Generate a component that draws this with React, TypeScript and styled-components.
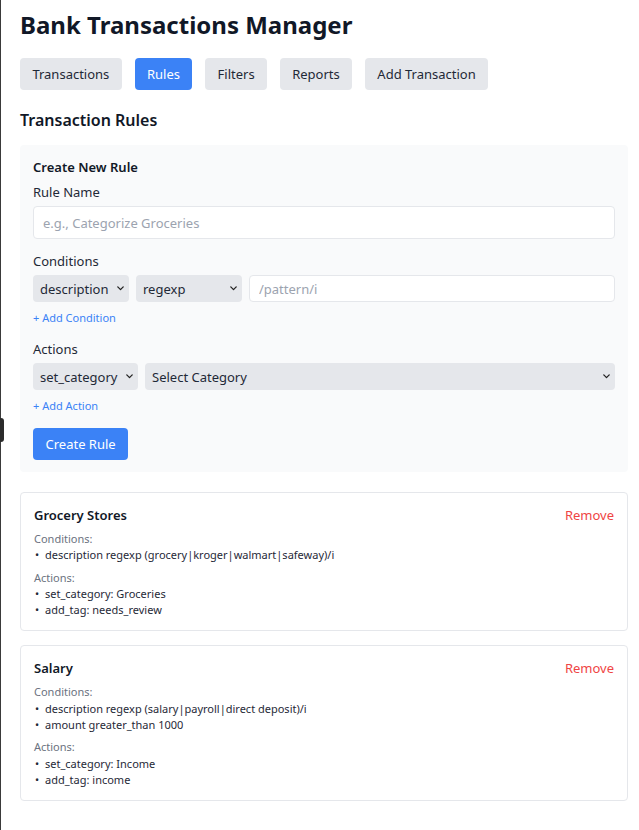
import React from 'react';
import styled, { createGlobalStyle } from 'styled-components';

const GlobalStyle = createGlobalStyle`
  html, body {
    margin: 0;
    padding: 0;
    background: #fff;
  }
  body {
    font-family: "Noto Sans", "Open Sans", sans-serif;
    color: #111827;
  }
  * {
    box-sizing: border-box;
  }
`;

type Rule = {
  name: string,
  conditions: string[],
  actions: string[],
};

const rules: Rule[] = [
  {
    name: 'Grocery Stores',
    conditions: ['description regexp (grocery|kroger|walmart|safeway)/i'],
    actions: ['set_category: Groceries', 'add_tag: needs_review'],
  },
  {
    name: 'Salary',
    conditions: [
      'description regexp (salary|payroll|direct deposit)/i',
      'amount greater_than 1000',
    ],
    actions: ['set_category: Income', 'add_tag: income'],
  },
];

const tabs = ['Transactions', 'Rules', 'Filters', 'Reports', 'Add Transaction'];

const Frame = styled.div`
  min-height: 100vh;
  border-left: 1px solid #3a3a3a;
  padding: 9px 11px 30px 19px;
`;

// the little drag grip on the pane edge
const Grip = styled.div`
  position: fixed;
  left: 0;
  top: 418px;
  width: 4px;
  height: 24px;
  background: #2b2b2b;
  border-radius: 0 3px 3px 0;
`;

const Title = styled.h1`
  margin: 0;
  font-size: 24px;
  line-height: 32px;
  font-weight: 700;
  color: #111827;
`;

const TabBar = styled.nav`
  display: flex;
  gap: 12.8px;
  margin-top: 17px;
`;

const Tab = styled.button<{ $active?: boolean }>`
  height: 32px;
  padding: 0 12.4px;
  border: none;
  border-radius: 4px;
  font-family: inherit;
  font-size: 13px;
  background: ${(p) => (p.$active ? '#3b82f6' : '#e5e7eb')};
  color: ${(p) => (p.$active ? '#fff' : '#1f2937')};
  cursor: pointer;
`;

const SectionTitle = styled.h2`
  margin: 16px 0 11px;
  font-size: 16px;
  line-height: 28px;
  font-weight: 600;
`;

const FormPanel = styled.section`
  background: #f9fafb;
  border-radius: 4px;
  padding: 12px 13px;
`;

const PanelTitle = styled.h3`
  margin: 0 0 5px;
  font-size: 13px;
  line-height: 20px;
  font-weight: 600;
`;

const Field = styled.div`
  margin-bottom: 12px;
`;

const Label = styled.label`
  display: block;
  font-size: 13px;
  line-height: 20px;
  margin-bottom: 4px;
  color: #1f2937;
`;

const TextInput = styled.input<{ $height?: number }>`
  display: block;
  width: 100%;
  min-width: 0;
  flex: 1;
  height: ${(p) => p.$height || 33}px;
  padding: 0 9px;
  border: 1px solid #e5e7eb;
  border-radius: 4px;
  background: #fff;
  font-family: inherit;
  font-size: 13px;
  color: #111827;
  &::placeholder {
    color: #9ca3af;
  }
`;

const Row = styled.div`
  display: flex;
  gap: 7px;
`;

const SelectWrap = styled.div<{ $width?: number }>`
  position: relative;
  ${(p) => (p.$width ? `width: ${p.$width}px; flex: none;` : 'flex: 1;')}
`;

const Select = styled.select`
  appearance: none;
  display: block;
  width: 100%;
  height: 27px;
  padding: 0 20px 0 7px;
  border: none;
  border-radius: 4px;
  background-color: #e5e7eb;
  font-family: inherit;
  font-size: 13px;
  color: #1f2937;
`;

const Chevron = styled.svg`
  position: absolute;
  right: 5px;
  top: 11px;
  width: 7px;
  height: 5px;
  pointer-events: none;
`;

const LinkButton = styled.button`
  margin-top: 8px;
  padding: 0;
  border: none;
  background: none;
  font-family: inherit;
  font-size: 11px;
  line-height: 16px;
  color: #3b82f6;
  cursor: pointer;
`;

const PrimaryButton = styled.button`
  height: 32px;
  padding: 0 12.5px;
  margin-top: 1px;
  border: none;
  border-radius: 4px;
  background: #3b82f6;
  color: #fff;
  font-family: inherit;
  font-size: 13px;
  cursor: pointer;
`;

const CardList = styled.div`
  display: flex;
  flex-direction: column;
  gap: 14px;
  margin-top: 20px;
`;

const RuleCard = styled.article`
  border: 1px solid #e5e7eb;
  border-radius: 4px;
  padding: 12px 13px 12px;
`;

const CardHeader = styled.div`
  display: flex;
  justify-content: space-between;
  align-items: center;
`;

const CardTitle = styled.h4`
  margin: 0;
  font-size: 13px;
  line-height: 20px;
  font-weight: 600;
`;

const RemoveButton = styled.button`
  padding: 0;
  border: none;
  background: none;
  font-family: inherit;
  font-size: 13px;
  color: #ef4444;
  cursor: pointer;
`;

const Group = styled.div`
  margin-top: 6px;
`;

const GroupLabel = styled.div`
  font-size: 11px;
  line-height: 16.3px;
  color: #6b7280;
`;

const ItemList = styled.ul`
  list-style: none;
  margin: 0;
  padding: 0;
`;

const Item = styled.li`
  font-size: 11px;
  line-height: 16.3px;
  color: #1f2937;
  &::before {
    content: '•';
    display: inline-block;
    width: 10px;
    margin-left: 1px;
  }
`;

type DropdownProps = {
  width?: number,
  value: string,
  options: { value: string, label: string }[],
};

const Dropdown = ({ width, value, options }: DropdownProps) => (
  <SelectWrap $width={width}>
    <Select defaultValue={value}>
      {options.map((o) => (
        <option key={o.value} value={o.value}>{o.label}</option>
      ))}
    </Select>
    <Chevron viewBox="0 0 7 5" fill="none">
      <path d="M0.8 0.9 L3.5 3.6 L6.2 0.9" stroke="#222" strokeWidth="1.3" strokeLinecap="round" strokeLinejoin="round" />
    </Chevron>
  </SelectWrap>
);

const opt = (v: string, label?: string) => ({ value: v, label: label || v });

export default function App() {
  return (
    <>
      <GlobalStyle />
      <Grip />
      <Frame>
        <Title>Bank Transactions Manager</Title>
        <TabBar>
          {tabs.map((t) => (
            <Tab key={t} $active={t === 'Rules'}>{t}</Tab>
          ))}
        </TabBar>

        <SectionTitle>Transaction Rules</SectionTitle>

        <FormPanel>
          <PanelTitle>Create New Rule</PanelTitle>
          <Field>
            <Label>Rule Name</Label>
            <TextInput placeholder="e.g., Categorize Groceries" />
          </Field>

          <Field>
            <Label>Conditions</Label>
            <Row>
              <Dropdown width={96} value="description" options={[opt('description'), opt('amount')]} />
              <Dropdown width={106} value="regexp" options={[opt('regexp'), opt('greater_than')]} />
              <TextInput $height={27} placeholder="/pattern/i" />
            </Row>
            <LinkButton>+ Add Condition</LinkButton>
          </Field>

          <Field>
            <Label>Actions</Label>
            <Row>
              <Dropdown width={105} value="set_category" options={[opt('set_category'), opt('add_tag')]} />
              <Dropdown
                value=""
                options={[opt('', 'Select Category'), opt('Groceries'), opt('Income')]}
              />
            </Row>
            <LinkButton>+ Add Action</LinkButton>
          </Field>

          <PrimaryButton>Create Rule</PrimaryButton>
        </FormPanel>

        <CardList>
          {rules.map((r) => (
            <RuleCard key={r.name}>
              <CardHeader>
                <CardTitle>{r.name}</CardTitle>
                <RemoveButton>Remove</RemoveButton>
              </CardHeader>
              <Group>
                <GroupLabel>Conditions:</GroupLabel>
                <ItemList>
                  {r.conditions.map((c) => <Item key={c}>{c}</Item>)}
                </ItemList>
              </Group>
              <Group>
                <GroupLabel>Actions:</GroupLabel>
                <ItemList>
                  {r.actions.map((a) => <Item key={a}>{a}</Item>)}
                </ItemList>
              </Group>
            </RuleCard>
          ))}
        </CardList>
      </Frame>
    </>
  );
}
